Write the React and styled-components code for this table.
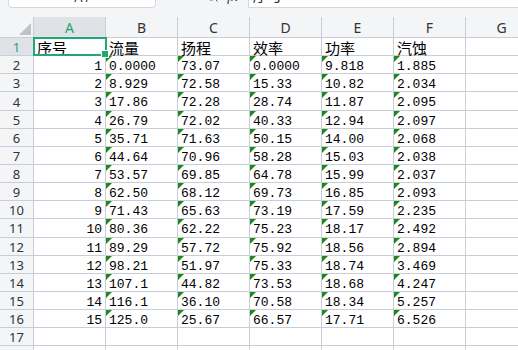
import React from 'react'
import styled, { createGlobalStyle } from 'styled-components'
import { Search } from 'lucide-react'

const GlobalStyle = createGlobalStyle`
    html, body {
        margin: 0;
        padding: 0;
        background: #f4f5f7;
        overflow: hidden;
    }
    * {
        box-sizing: border-box;
    }
`

const LINE = '#c8cdd9'
const GREEN = '#21a675'

const Page = styled.div`
    width: 518px;
    height: 350px;
    overflow: hidden;
    font-family: 'Liberation Mono', 'Noto Sans CJK SC', monospace;
`

const Toolbar = styled.div`
    display: flex;
    align-items: flex-end;
    height: 24px;
    margin-top: -16px;
    padding-left: 8px;
`

const NameBox = styled.div`
    width: 148px;
    height: 23px;
    background: #fff;
    border: 1px solid #d3d6dc;
    border-radius: 4px;
    display: flex;
    justify-content: center;
    align-items: center;
    padding-top: 0;
    font: 13px 'Noto Sans', sans-serif;
    color: #333;
`

const Tools = styled.div`
    display: flex;
    align-items: center;
    gap: 8px;
    margin-left: 49px;
    height: 24px;
    padding-top: 0;
    color: #555;
`

const Fx = styled.span`
    font: italic 15px 'Liberation Serif', serif;
    color: #444;
`

const FormulaInput = styled.div`
    flex: 1;
    margin-left: 10px;
    height: 24px;
    background: #fff;
    border-left: 1px solid #d3d6dc;
    border-bottom: 1px solid #d3d6dc;
    padding: 1px 0 0 4px;
    font: 15px 'Noto Sans CJK SC', sans-serif;
    line-height: 20px;
    color: #222;
`

const Sheet = styled.div`
    margin-top: 9px;
    display: grid;
    grid-template-columns: 34px repeat(7, 72px);
    grid-auto-rows: 18.15px;
    grid-template-rows: 21px;
    background: #fff;
`

const ColHead = styled.div`
    background: ${p => (p.active ? '#dfe2e7' : '#f4f5f7')};
    border-right: 1px solid ${LINE};
    border-bottom: 1px solid ${LINE};
    display: flex;
    align-items: center;
    justify-content: center;
    font: 14px 'Noto Sans', sans-serif;
    color: ${p => (p.active ? GREEN : '#333')};
`

const Corner = styled(ColHead)`
    position: relative;
    &::after {
        content: '';
        position: absolute;
        right: 2px;
        bottom: 2px;
        border-style: solid;
        border-width: 0 0 12px 12px;
        border-color: transparent transparent #bfc3c9 transparent;
    }
`

const RowHead = styled.div`
    background: ${p => (p.active ? '#dfe2e7' : '#f4f5f7')};
    border-right: 1px solid ${LINE};
    border-bottom: 1px solid ${LINE};
    display: flex;
    align-items: center;
    justify-content: center;
    padding-top: 1px;
    font: 13px 'Noto Sans', sans-serif;
    color: ${p => (p.active ? GREEN : '#333')};
`

const Cell = styled.div`
    position: relative;
    border-right: 1px solid ${LINE};
    border-bottom: 1px solid ${LINE};
    padding: ${p => (p.cjk ? '1px 3px 0' : '2px 3px 0')};
    text-align: ${p => (p.num ? 'right' : 'left')};
    white-space: nowrap;
    font-size: ${p => (p.cjk ? '15px' : '13px')};
    font-family: ${p =>
        p.cjk
            ? "'Noto Sans CJK SC', sans-serif"
            : "'Liberation Mono', 'Noto Sans CJK SC', monospace"};
    line-height: 18px;
    color: #000;

    ${p =>
        p.mark &&
        `
        &::before {
            content: '';
            position: absolute;
            left: 0;
            top: 0;
            border-style: solid;
            border-width: 6px 6px 0 0;
            border-color: #1a8a1a transparent transparent transparent;
        }
    `}
`

const Selection = styled.div`
    position: absolute;
    left: -1px;
    top: -1px;
    right: -2px;
    bottom: -1px;
    border: 2px solid ${GREEN};
    pointer-events: none;
    z-index: 2;

    &::after {
        content: '';
        position: absolute;
        right: -4px;
        bottom: -4px;
        width: 6px;
        height: 6px;
        background: ${GREEN};
        border: 1px solid #fff;
    }
`

const COLS = ['A', 'B', 'C', 'D', 'E', 'F', 'G']
const HEADERS = ['序号', '流量', '扬程', '效率', '功率', '汽蚀']

const DATA = {
    B: ['0.0000', '8.929', '17.86', '26.79', '35.71', '44.64', '53.57', '62.50', '71.43', '80.36', '89.29', '98.21', '107.1', '116.1', '125.0'],
    C: ['73.07', '72.58', '72.28', '72.02', '71.63', '70.96', '69.85', '68.12', '65.63', '62.22', '57.72', '51.97', '44.82', '36.10', '25.67'],
    D: ['0.0000', '15.33', '28.74', '40.33', '50.15', '58.28', '64.78', '69.73', '73.19', '75.23', '75.92', '75.33', '73.53', '70.58', '66.57'],
    E: ['9.818', '10.82', '11.87', '12.94', '14.00', '15.03', '15.99', '16.85', '17.59', '18.17', '18.56', '18.74', '18.68', '18.34', '17.71'],
    F: ['1.885', '2.034', '2.095', '2.097', '2.068', '2.038', '2.037', '2.093', '2.235', '2.492', '2.894', '3.469', '4.247', '5.257', '6.526'],
}

function renderRow(r) {
    const cells = [
        <RowHead key="h" active={r === 1}>
            {r}
        </RowHead>,
    ]
    COLS.forEach((c, ci) => {
        const key = c + r
        if (r === 1) {
            cells.push(
                <Cell key={key} cjk>
                    {HEADERS[ci] || ''}
                    {c === 'A' && <Selection />}
                </Cell>
            )
        } else if (r <= 16 && c === 'A') {
            cells.push(
                <Cell key={key} num>
                    {r - 1}
                </Cell>
            )
        } else if (r <= 16 && DATA[c]) {
            cells.push(
                <Cell key={key} mark>
                    {DATA[c][r - 2]}
                </Cell>
            )
        } else {
            cells.push(<Cell key={key} />)
        }
    })
    return cells
}

export default function App() {
    const rows = []
    for (let r = 1; r <= 18; r++) rows.push(...renderRow(r))

    return (
        <Page>
            <GlobalStyle />
            <Toolbar>
                <NameBox>A1</NameBox>
                <Tools>
                    <Search size={14} strokeWidth={1.6} />
                    <Fx>fx</Fx>
                </Tools>
                <FormulaInput>序号</FormulaInput>
            </Toolbar>
            <Sheet>
                <Corner />
                {COLS.map(c => (
                    <ColHead key={c} active={c === 'A'}>
                        {c}
                    </ColHead>
                ))}
                {rows}
            </Sheet>
        </Page>
    )
}
